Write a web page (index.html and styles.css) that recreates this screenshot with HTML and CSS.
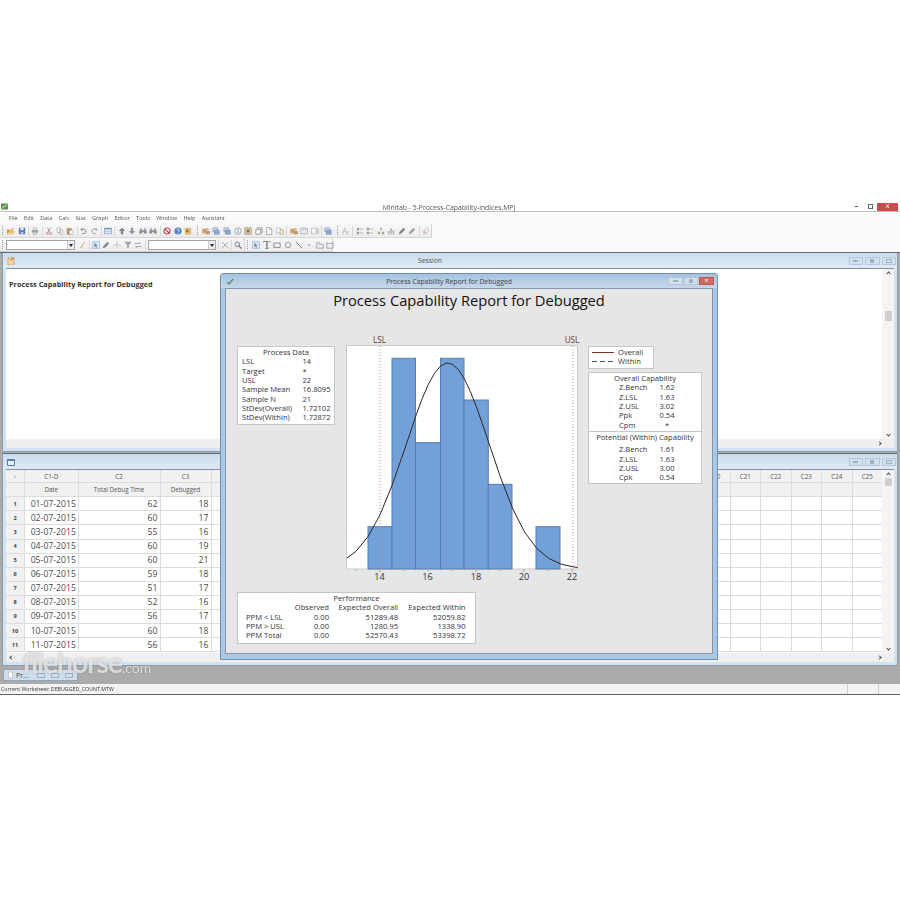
FILE: index.html
```html
<!DOCTYPE html>
<html lang="en">
<head>
    <meta charset="UTF-8">
    <meta name="viewport" content="width=device-width, initial-scale=1.0">
    <title>Minitab - 5-Process-Capability-indices.MPJ</title>
    <link rel="stylesheet" href="styles.css">
</head>
<body>
    <svg class="sprite" aria-hidden="true">
        <symbol id="i-open" viewBox="0 0 10 10"><path d="M0 3h3l1 1h4v1H3L1 9H0z" fill="#c98f2e"/><path d="M3 5h7L8 9H1z" fill="#efc061"/><path d="M6 1l2 1-1 2z" fill="#d9542b"/></symbol>
        <symbol id="i-save" viewBox="0 0 10 10"><path d="M1 1h8v8H1z" fill="#3d62a8"/><path d="M3 1h4v3H3z" fill="#e8eef8"/><path d="M3 6h4v3H3z" fill="#9db3d6"/></symbol>
        <symbol id="i-print" viewBox="0 0 10 10"><path d="M3 1h4v3H3z" fill="#eee" stroke="#888" stroke-width=".6"/><path d="M1 4h8v3H1z" fill="#8b8f96"/><path d="M3 6h4v3H3z" fill="#ddd" stroke="#777" stroke-width=".6"/></symbol>
        <symbol id="i-cut" viewBox="0 0 10 10"><path d="M3 1l3 5M7 1L4 6" stroke="#777" fill="none"/><circle cx="3" cy="8" r="1.3" fill="none" stroke="#a66"/><circle cx="7" cy="8" r="1.3" fill="none" stroke="#a66"/></symbol>
        <symbol id="i-copy" viewBox="0 0 10 10"><path d="M1.5 1h4v6h-4zM4.5 3.5h4V9h-4z" fill="#fafafa" stroke="#999" stroke-width=".8"/></symbol>
        <symbol id="i-paste" viewBox="0 0 10 10"><path d="M1 1.5h6v8H1z" fill="#a97f45"/><path d="M4 4h5v5.500H4z" fill="#f4f4f4" stroke="#888" stroke-width=".6"/></symbol>
        <symbol id="i-undo" viewBox="0 0 10 10"><path d="M2 3.500a3 3 0 1 1 1 4.500" fill="none" stroke="#667" stroke-width="1.2"/><path d="M.5 2l3.500.5L2 5z" fill="#667"/></symbol>
        <symbol id="i-redo" viewBox="0 0 10 10"><path d="M8 3.500a3 3 0 1 0-1 4.500" fill="none" stroke="#889" stroke-width="1.2"/><path d="M9.500 2L6 2.500 8 5z" fill="#889"/></symbol>
        <symbol id="i-sheet" viewBox="0 0 10 10"><path d="M.5 1.5h9v7h-9z" fill="#dfe9f5" stroke="#5d7fae" stroke-width=".8"/><path d="M.5 1.5h9V3h-9z" fill="#5d7fae"/><path d="M1.5 5.5h7" stroke="#9cb4d2"/></symbol>
        <symbol id="i-up" viewBox="0 0 10 10"><path d="M5 1l4 4H6.500v4h-3V5H1z" fill="#6a7480"/></symbol>
        <symbol id="i-down" viewBox="0 0 10 10"><path d="M5 9l4-4H6.500V1h-3v4H1z" fill="#7c8590"/></symbol>
        <symbol id="i-find" viewBox="0 0 10 10"><path d="M1 3h3v5H0zM6 3h3l1 5H6zM4 4h2v2H4z" fill="#777f88"/><path d="M1.5 1h2v2h-2zM6.5 1h2v2h-2z" fill="#9aa1a9"/></symbol>
        <symbol id="i-stop" viewBox="0 0 10 10"><circle cx="5" cy="5" r="3.8" fill="#fff" stroke="#c4262e" stroke-width="1.4"/><path d="M2.500 2.500l5 5" stroke="#c4262e" stroke-width="1.4"/></symbol>
        <symbol id="i-help" viewBox="0 0 10 10"><circle cx="5" cy="5" r="4.5" fill="#2f6fb7"/><path d="M3.500 4a1.500 1.500 0 1 1 2 1.500L5 6.500" fill="none" stroke="#fff"/><path d="M4.500 7.300h1v1h-1z" fill="#fff"/></symbol>
        <symbol id="i-book" viewBox="0 0 10 10"><path d="M1 1h8v8.500H1z" fill="#d8b65c"/><path d="M3 2.500l3 2.500-3 2.500z" fill="#8a3b2a"/></symbol>
        <symbol id="i-chart" viewBox="0 0 10 10"><path d="M0 2h6v6H0z" fill="#d9a869"/><path d="M4 5h6v4H4z" fill="#b98a52"/><path d="M1 7l3-4 2 2" fill="none" stroke="#7a5a3a" stroke-width=".8"/><path d="M7 1l2 2H6z" fill="#c54"/></symbol>
        <symbol id="i-stack" viewBox="0 0 10 10"><path d="M1 1h6v5H1z" fill="#c7d6ea" stroke="#5978a8" stroke-width=".7"/><path d="M3 4h6v5H3z" fill="#7e9ccb" stroke="#4f6f9f" stroke-width=".7"/></symbol>
        <symbol id="i-info" viewBox="0 0 10 10"><circle cx="5" cy="5" r="4" fill="#eef2f7" stroke="#7b8ba0"/><path d="M4.500 4.300h1v3.200h-1zM4.500 2.500h1v1h-1z" fill="#4f6f9f"/></symbol>
        <symbol id="i-note" viewBox="0 0 10 10"><path d="M1 1h8v8H1z" fill="#f0d9a3" stroke="#6f5a30" stroke-width=".8"/><path d="M3 3h4v4H3z" fill="#666"/></symbol>
        <symbol id="i-win" viewBox="0 0 10 10"><path d="M3 1h6v6H3z" fill="#ddd" stroke="#777" stroke-width=".8"/><path d="M1 3h6v6H1z" fill="#f7f7f7" stroke="#666" stroke-width=".8"/></symbol>
        <symbol id="i-new" viewBox="0 0 10 10"><path d="M2 .5h4L8.500 3v6.500H2z" fill="#fff" stroke="#777" stroke-width=".8"/><path d="M6 .5V3h2.500" fill="none" stroke="#777" stroke-width=".8"/></symbol>
        <symbol id="i-docs" viewBox="0 0 10 10"><path d="M.5 1.5h5v6h-5z" fill="#fff" stroke="#999" stroke-width=".8"/><path d="M5 3.500h4V9H5z" fill="#f2ead8" stroke="#a58f60" stroke-width=".8"/></symbol>
        <symbol id="i-table" viewBox="0 0 10 10"><path d="M.5 1.5h9v7h-9z" fill="#f3f6fa" stroke="#7d8ea5" stroke-width=".8"/><path d="M.5 3.500h9M3.500 1.500v7M6.500 1.500v7" stroke="#a7b5c7" stroke-width=".6"/></symbol>
        <symbol id="i-panes" viewBox="0 0 10 10"><path d="M.5 1.5h9v7h-9z" fill="#f7f7f7" stroke="#999" stroke-width=".8"/><path d="M5.500 2H9v6H5.500z" fill="#c5c9ce"/></symbol>
        <symbol id="i-fx" viewBox="0 0 10 10"><path d="M1 9l2-7h2M2 5h3M5 5l3 4M8 5L5.500 9" fill="none" stroke="#999" stroke-width=".8"/></symbol>
        <symbol id="i-tree" viewBox="0 0 10 10"><path d="M1 1h3v3H1zM1 6h3v3H1z" fill="#8d8f7a"/><path d="M5 2.500h4M5 7.500h4" stroke="#aaa" stroke-width="1.2"/></symbol>
        <symbol id="i-org" viewBox="0 0 10 10"><path d="M4 1h2v3H4zM1 6h3v3H1zM6 6h3v3H6z" fill="#9a9a86"/></symbol>
        <symbol id="i-tools" viewBox="0 0 10 10"><path d="M1 8V5h2v3zM4 8V2h2v6zM7 8V4h2v4z" fill="#9aa3ab"/><path d="M0 9h10" stroke="#bbb"/></symbol>
        <symbol id="i-pen" viewBox="0 0 10 10"><path d="M1 9l1-3 5-5 2 2-5 5z" fill="#666f78"/></symbol>
        <symbol id="i-pen2" viewBox="0 0 10 10"><path d="M1 9l1-3 5-5 2 2-5 5z" fill="#8b9097"/><path d="M7 1l2 2-1 1-2-2z" fill="#c8a46a"/></symbol>
        <symbol id="i-erase" viewBox="0 0 10 10"><path d="M1 6l5-5 3 3-5 5H3z" fill="#f4f4f4" stroke="#aaa" stroke-width=".8"/><path d="M1 6l2-2 3 3-2 2H3z" fill="#d9b8b8"/></symbol>
        <symbol id="i-brush" viewBox="0 0 10 10"><path d="M2 9L7 2l1 .7L4 9.500zM8 1c1-.5 1.500.3 1 1L8 2.700 7.200 2z" fill="#c7b59c"/></symbol>
        <symbol id="i-select" viewBox="0 0 10 10"><path d="M.5.5h9v9h-9z" fill="#cfe3f7" stroke="#7fa8d1" stroke-width=".8"/><path d="M3 2l4 4-1.800.2 1 2-1 .4-1-2L3 7.800z" fill="#5d7590"/></symbol>
        <symbol id="i-plus" viewBox="0 0 10 10"><path d="M5 0v10M0 5h10" stroke="#b4b8bc"/></symbol>
        <symbol id="i-funnel" viewBox="0 0 10 10"><path d="M1 1h8v1L6 5v4H4V5L1 2z" fill="#8b9197"/></symbol>
        <symbol id="i-eq" viewBox="0 0 10 10"><path d="M1 3h7L6.500 1.500M9 7H2l1.500 1.500" fill="none" stroke="#7d848b"/></symbol>
        <symbol id="i-x" viewBox="0 0 10 10"><path d="M1 1l8 8M9 1L1 9" stroke="#8b8f94"/></symbol>
        <symbol id="i-search" viewBox="0 0 10 10"><circle cx="4" cy="4" r="3" fill="#e9f0f7" stroke="#556"/><path d="M6 6l3.500 3.500" stroke="#556" stroke-width="1.5"/></symbol>
        <symbol id="i-rect" viewBox="0 0 10 10"><path d="M1 2.500h8V8H1z" fill="none" stroke="#5e666e"/></symbol>
        <symbol id="i-circle" viewBox="0 0 10 10"><circle cx="5" cy="5" r="3.5" fill="none" stroke="#6b7279"/></symbol>
        <symbol id="i-line" viewBox="0 0 10 10"><path d="M1 1l8 8" stroke="#555c63" stroke-width="1.1"/></symbol>
        <symbol id="i-dot" viewBox="0 0 10 10"><circle cx="5" cy="5" r="1.3" fill="#9aa1a8"/></symbol>
        <symbol id="i-poly" viewBox="0 0 10 10"><path d="M1 2h3v2h5v5H1z" fill="none" stroke="#7f8890"/></symbol>
        <symbol id="i-poly2" viewBox="0 0 10 10"><path d="M1 2l2 1h4l2-1v7H1z" fill="none" stroke="#7f8890"/></symbol>
    </svg>

    <div class="app">
        <header class="title-bar">
            <svg class="app-icon" viewBox="0 0 8 7"><path d="M0 0h8v7H0z" fill="#5f9448"/><path d="M1 6l2-3 1 1 3-3" fill="none" stroke="#e5f0dc"/></svg>
            <span class="app-name">Minitab - 5-Process-Capability-indices.MPJ</span>
            <div class="app-buttons">
                <span class="app-min"></span>
                <span class="app-max"></span>
                <span class="app-close">x</span>
            </div>
        </header>

        <nav class="menu">
            <span>File</span><span>Edit</span><span>Data</span><span>Calc</span><span>Stat</span><span>Graph</span><span>Editor</span><span>Tools</span><span>Window</span><span>Help</span><span>Assistant</span>
        </nav>

        <div class="band">
            <div class="toolbar toolbar-main">
                <i class="grip"></i>
                <svg class="ic"><use href="#i-open"/></svg>
                <svg class="ic"><use href="#i-save"/></svg>
                <i class="sep"></i>
                <svg class="ic"><use href="#i-print"/></svg>
                <i class="sep"></i>
                <svg class="ic"><use href="#i-cut"/></svg>
                <svg class="ic"><use href="#i-copy"/></svg>
                <svg class="ic"><use href="#i-paste"/></svg>
                <i class="sep"></i>
                <svg class="ic"><use href="#i-undo"/></svg>
                <svg class="ic"><use href="#i-redo"/></svg>
                <i class="sep"></i>
                <svg class="ic"><use href="#i-sheet"/></svg>
                <i class="sep"></i>
                <svg class="ic"><use href="#i-up"/></svg>
                <svg class="ic"><use href="#i-down"/></svg>
                <svg class="ic"><use href="#i-find"/></svg>
                <svg class="ic"><use href="#i-find"/></svg>
                <i class="sep"></i>
                <svg class="ic"><use href="#i-stop"/></svg>
                <svg class="ic"><use href="#i-help"/></svg>
                <svg class="ic"><use href="#i-book"/></svg>
                <i class="grip"></i>
                <svg class="ic"><use href="#i-chart"/></svg>
                <svg class="ic"><use href="#i-stack"/></svg>
                <svg class="ic"><use href="#i-stack"/></svg>
                <svg class="ic"><use href="#i-info"/></svg>
                <svg class="ic"><use href="#i-note"/></svg>
                <svg class="ic"><use href="#i-win"/></svg>
                <svg class="ic"><use href="#i-new"/></svg>
                <svg class="ic"><use href="#i-docs"/></svg>
                <i class="sep"></i>
                <svg class="ic"><use href="#i-chart"/></svg>
                <svg class="ic"><use href="#i-table"/></svg>
                <svg class="ic"><use href="#i-panes"/></svg>
                <i class="sep"></i>
                <svg class="ic"><use href="#i-stack"/></svg>
                <i class="grip"></i>
                <svg class="ic"><use href="#i-fx"/></svg>
                <i class="sep"></i>
                <svg class="ic"><use href="#i-tree"/></svg>
                <svg class="ic"><use href="#i-tree"/></svg>
                <svg class="ic"><use href="#i-org"/></svg>
                <svg class="ic"><use href="#i-tools"/></svg>
                <svg class="ic"><use href="#i-pen"/></svg>
                <svg class="ic"><use href="#i-pen2"/></svg>
                <i class="sep"></i>
                <svg class="ic"><use href="#i-erase"/></svg>
            </div>
        </div>

        <div class="band">
            <div class="toolbar toolbar-edit">
                <i class="grip"></i>
                <div class="combo combo-a"><b></b></div>
                <svg class="ic"><use href="#i-brush"/></svg>
                <i class="sep"></i>
                <svg class="ic"><use href="#i-select"/></svg>
                <svg class="ic"><use href="#i-pen"/></svg>
                <svg class="ic"><use href="#i-plus"/></svg>
                <svg class="ic"><use href="#i-funnel"/></svg>
                <svg class="ic"><use href="#i-eq"/></svg>
                <i class="sep"></i>
                <div class="combo combo-b"><b></b></div>
                <i class="sep"></i>
                <svg class="ic"><use href="#i-x"/></svg>
                <i class="sep"></i>
                <svg class="ic"><use href="#i-search"/></svg>
            </div>
            <div class="toolbar toolbar-draw">
                <i class="grip"></i>
                <svg class="ic"><use href="#i-select"/></svg>
                <span class="ic ic-t">T</span>
                <svg class="ic"><use href="#i-rect"/></svg>
                <svg class="ic"><use href="#i-circle"/></svg>
                <svg class="ic"><use href="#i-line"/></svg>
                <svg class="ic"><use href="#i-dot"/></svg>
                <svg class="ic"><use href="#i-poly"/></svg>
                <svg class="ic"><use href="#i-poly2"/></svg>
            </div>
        </div>

        <main class="mdi">
            <section class="win session">
                <div class="win-title">
                    <svg class="win-icon" viewBox="0 0 8 8"><path d="M1 1h6v7H1z" fill="#f3d9a6" stroke="#b98b46" stroke-width=".6"/><path d="M3 3l3-3 1 1-3 3z" fill="#d98a3d"/></svg>
                    <span class="win-name">Session</span>
                    <div class="win-buttons"><span class="btn-min"></span><span class="btn-max"></span><span class="btn-close"></span></div>
                </div>
                <div class="win-body">
                    <div class="session-text">Process Capability Report for Debugged</div>
                    <div class="vscroll"><i class="arrow-up"></i><span class="thumb thumb-session"></span><i class="arrow-down"></i></div>
                </div>
                <div class="hscroll"><i class="arrow-right"></i></div>
            </section>

            <section class="win worksheet">
                <div class="win-title">
                    <svg class="win-icon" viewBox="0 0 8 8"><path d="M.5 1.5h7v6h-7z" fill="#e6eef7" stroke="#5a7fa8"/><path d="M.5 1.5h7V3h-7z" fill="#5a7fa8"/></svg>
                    <div class="win-buttons"><span class="btn-min"></span><span class="btn-max"></span><span class="btn-close"></span></div>
                </div>
                <div class="win-body">
                    <div class="sheet">
                        <div class="th rn">↓</div><div class="th">C1-D</div><div class="th">C2</div><div class="th">C3</div>
                        <div class="th rest"><span>C4</span><span>C5</span><span>C6</span><span>C7</span><span>C8</span><span>C9</span><span>C10</span><span>C11</span><span>C12</span><span>C13</span><span>C14</span><span>C15</span><span>C16</span><span>C17</span><span>C18</span><span>C19</span><span>C20</span><span>C21</span><span>C22</span><span>C23</span><span>C24</span><span>C25</span></div>

                        <div class="th rn"></div><div class="th name">Date</div><div class="th name">Total Debug Time</div><div class="th name">Debugged</div><div class="th rest"></div>

                        <div class="rn">1</div><div class="date">01-07-2015</div><div class="num">62</div><div class="num">18</div><div class="rest"></div>
                        <div class="rn">2</div><div class="date">02-07-2015</div><div class="num">60</div><div class="num">17</div><div class="rest"></div>
                        <div class="rn">3</div><div class="date">03-07-2015</div><div class="num">55</div><div class="num">16</div><div class="rest"></div>
                        <div class="rn">4</div><div class="date">04-07-2015</div><div class="num">60</div><div class="num">19</div><div class="rest"></div>
                        <div class="rn">5</div><div class="date">05-07-2015</div><div class="num">60</div><div class="num">21</div><div class="rest"></div>
                        <div class="rn">6</div><div class="date">06-07-2015</div><div class="num">59</div><div class="num">18</div><div class="rest"></div>
                        <div class="rn">7</div><div class="date">07-07-2015</div><div class="num">51</div><div class="num">17</div><div class="rest"></div>
                        <div class="rn">8</div><div class="date">08-07-2015</div><div class="num">52</div><div class="num">16</div><div class="rest"></div>
                        <div class="rn">9</div><div class="date">09-07-2015</div><div class="num">56</div><div class="num">17</div><div class="rest"></div>
                        <div class="rn">10</div><div class="date">10-07-2015</div><div class="num">60</div><div class="num">18</div><div class="rest"></div>
                        <div class="rn">11</div><div class="date">11-07-2015</div><div class="num">56</div><div class="num">16</div><div class="rest"></div>
                    </div>
                    <div class="vscroll"><i class="arrow-up"></i><span class="thumb"></span><i class="arrow-down"></i></div>
                </div>
                <div class="hscroll"><i class="arrow-left"></i><i class="arrow-right"></i></div>
            </section>

            <div class="tabs">
                <div class="tab">
                    <svg viewBox="0 0 6 8"><path d="M.5.5h5v7h-5z" fill="#fff" stroke="#999" stroke-width=".6"/></svg>
                    <span class="tab-name">Pr...</span>
                    <i class="tab-btn"></i><i class="tab-btn"></i><i class="tab-btn"></i>
                </div>
            </div>

            <div class="watermark">filehorse<small>.com</small></div>

            <!-- graph window floats over the session and worksheet -->
            <section class="graph-win">
                <div class="graph-title">
                    <svg class="graph-check" viewBox="0 0 8 7"><path d="M1 4l2 2 4-5" fill="none" stroke="#5f8a62" stroke-width="1.3"/></svg>
                    <span class="graph-name">Process Capability Report for Debugged</span>
                    <div class="graph-buttons"><span class="btn-min"></span><span class="btn-max"></span><span class="graph-close">×</span></div>
                </div>
                <div class="graph-body">
                    <h1>Process Capability Report for Debugged</h1>
                    <div class="graph-row">
                        <div class="panel process">
                            <div class="panel-head">Process Data</div>
                            <div class="kv"><span>LSL</span><span>14</span></div>
                            <div class="kv"><span>Target</span><span>*</span></div>
                            <div class="kv"><span>USL</span><span>22</span></div>
                            <div class="kv"><span>Sample Mean</span><span>16.8095</span></div>
                            <div class="kv"><span>Sample N</span><span>21</span></div>
                            <div class="kv"><span>StDev(Overall)</span><span>1.72102</span></div>
                            <div class="kv"><span>StDev(Within)</span><span>1.72872</span></div>
                        </div>

                        <svg class="chart" viewBox="346 332 234 258">
                            <rect x="346.5" y="346.5" width="231" height="223.5" fill="#fff" stroke="#c9c9c9"/>
                            <g fill="#72a1da" stroke="#5a7dab">
                                <rect x="368" y="527.7" width="24" height="42.3"/>
                                <rect x="392" y="359.3" width="23.5" height="210.7"/>
                                <rect x="415.5" y="443.7" width="25" height="126.3"/>
                                <rect x="440.5" y="359.3" width="23.5" height="210.7"/>
                                <rect x="464" y="401" width="24.3" height="169"/>
                                <rect x="488.3" y="485.3" width="23.7" height="84.7"/>
                                <rect x="536" y="527.7" width="24" height="42.3"/>
                            </g>
                            <path d="M380 347v223M573 347v223" stroke="#c98a8a" stroke-dasharray="1 2" fill="none"/>
                            <path d="M380 570v3M428 570v3M476 570v3M524 570v3M572 570v3M356 570v2M404 570v2M452 570v2M500 570v2M548 570v2" stroke="#aaa" fill="none"/>
                            <polyline fill="none" stroke="#2f2424" stroke-width="1" stroke-linejoin="round" points="347,559 356,552.3 368,537.6 380,515.8 392,486.4 404.2,451.6 416.2,415.9 422.2,399.6 428.2,385.6 434.3,374.7 440.3,367.3 446.3,364 452.3,365.2 458.4,370.6 464.4,379.9 470.4,392.7 476.4,407.9 482.4,424.8 488.5,442.9 500.5,478.3 512.6,509.4 524.6,533.1 536.7,549.4 548.7,559.4 560.8,565 572.8,567.8 577.6,568.5"/>
                            <text class="spec" x="379.5" y="343.5">LSL</text>
                            <text class="spec" x="572" y="343.5">USL</text>
                            <text class="tick" x="379.5" y="581">14</text>
                            <text class="tick" x="427.5" y="581">16</text>
                            <text class="tick" x="476" y="581">18</text>
                            <text class="tick" x="524" y="581">20</text>
                            <text class="tick" x="572" y="581">22</text>
                        </svg>

                        <div class="side">
                            <div class="panel legend">
                                <div class="legend-row"><i class="swatch"></i>Overall</div>
                                <div class="legend-row"><i class="swatch dashed"></i>Within</div>
                            </div>
                            <div class="panel capability">
                                <div class="panel-head">Overall Capability</div>
                                <div class="cap"><span>Z.Bench</span><span>1.62</span></div>
                                <div class="cap"><span>Z.LSL</span><span>1.63</span></div>
                                <div class="cap"><span>Z.USL</span><span>3.02</span></div>
                                <div class="cap"><span>Ppk</span><span>0.54</span></div>
                                <div class="cap"><span>Cpm</span><span>*</span></div>
                                <div class="panel-head potential">Potential (Within) Capability</div>
                                <div class="cap"><span>Z.Bench</span><span>1.61</span></div>
                                <div class="cap"><span>Z.LSL</span><span>1.63</span></div>
                                <div class="cap"><span>Z.USL</span><span>3.00</span></div>
                                <div class="cap"><span>Cpk</span><span>0.54</span></div>
                            </div>
                        </div>
                    </div>

                    <div class="panel performance">
                        <div class="panel-head">Performance</div>
                        <div class="perf"><span></span><span>Observed</span><span>Expected Overall</span><span>Expected Within</span></div>
                        <div class="perf"><span>PPM &lt; LSL</span><span>0.00</span><span>51289.48</span><span>52059.82</span></div>
                        <div class="perf"><span>PPM &gt; USL</span><span>0.00</span><span>1280.95</span><span>1338.90</span></div>
                        <div class="perf"><span>PPM Total</span><span>0.00</span><span>52570.43</span><span>53398.72</span></div>
                    </div>
                </div>
            </section>
        </main>

        <footer class="status">
            <span class="status-text">Current Worksheet: DEBUGGED_COUNT.MTW</span>
            <i class="status-cell"></i>
            <i class="status-cell"></i>
        </footer>
    </div>
</body>
</html>
```

FILE: styles.css
```css
body {
    margin: 0;
    background: #fff;
    font-family: "Open Sans", "Noto Sans", sans-serif;
    color: #333;
}
.sprite {
    position: absolute;
    width: 0;
    height: 0;
}
.app {
    margin-top: 195px;
    height: 500px;
    display: flex;
    flex-direction: column;
    filter: blur(0.4px);
}

/* title bar and menu */
.title-bar {
    height: 17px;
    box-sizing: border-box;
    border-bottom: 1px solid #bdbdbd;
    display: flex;
    align-items: center;
}
.app-icon {
    width: 7px;
    height: 7px;
    margin: 7px 0 0 1px;
}
.app-name {
    flex: 1;
    padding-left: 35px;
    text-align: center;
    font-size: 6.85px;
    color: #555;
    margin-top: 8px;
}
.app-buttons {
    display: flex;
    align-items: center;
    margin: 7px 2px 0 0;
}
.app-min {
    width: 3px;
    height: 1px;
    background: #555;
    margin-right: 10px;
}
.app-max {
    width: 3px;
    height: 3px;
    border: 1px solid #666;
    margin-right: 4px;
}
.app-close {
    width: 21px;
    height: 8px;
    line-height: 6px;
    background: #cb4a4a;
    color: #fff;
    font-size: 7px;
    text-align: center;
}
.menu {
    height: 12px;
    display: flex;
    align-items: center;
    gap: 6.4px;
    padding-left: 9px;
    font-size: 5.5px;
    color: #555;
    background: #fafafa;
}
.band {
    display: flex;
    height: 14px;
    background: #fafafa;
}

/* toolbars */
.toolbar {
    display: flex;
    align-items: center;
    padding-left: 2px;
    box-sizing: border-box;
    height: 14px;
    background: linear-gradient(#f7f7f7, #ececec);
    border-right: 1px solid #d5d5d5;
    border-bottom: 1px solid #d5d5d5;
}
.toolbar-main {
    width: 432px;
}
.toolbar-edit {
    width: 245px;
}
.toolbar-draw {
    width: 88px;
}
.ic {
    width: 8px;
    height: 8px;
    margin: 0 1.3px;
    flex: none;
    display: block;
    opacity: 0.85;
}
.ic-t {
    font-family: "Liberation Serif", serif;
    font-size: 12px;
    line-height: 9px;
    color: #35506e;
    text-align: center;
}
.sep {
    width: 1px;
    height: 10px;
    margin: 0 1px;
    background: #d8d8d8;
    flex: none;
}
.grip {
    width: 1px;
    height: 9px;
    margin: 0 3px 0 0;
    flex: none;
    background: repeating-linear-gradient(#999 0 1px, transparent 1px 2px);
}
.toolbar .grip:not(:first-child) {
    margin: 0 3px;
}
.combo {
    height: 10px;
    box-sizing: border-box;
    background: #fff;
    border: 1px solid #a5a5a5;
    display: flex;
    justify-content: flex-end;
    flex: none;
}
.combo b {
    width: 6px;
    background: #eee;
    border-left: 1px solid #ccc;
    position: relative;
}
.combo b::after {
    content: "";
    position: absolute;
    left: 1px;
    top: 3px;
    border: 2px solid transparent;
    border-top: 3px solid #222;
    border-bottom: 0;
}
.combo-a {
    width: 69px;
    margin-right: 2px;
}
.combo-b {
    width: 68px;
    margin: 0 1px;
}

/* child windows */
.mdi {
    flex: 1;
    position: relative;
    display: flex;
    flex-direction: column;
    background: #ababab;
    border-top: 1px solid #5e6b78;
}
.win {
    margin: 0 2px;
    display: flex;
    flex-direction: column;
    box-sizing: border-box;
    padding: 0 3px 3px;
    background: #d3e2f0;
    border: 1px solid #8c9cad;
    border-top: 0;
}
.session {
    height: 199px;
}
.worksheet {
    height: 213px;
    margin-top: 1px;
    border-top: 1px solid #5e6b78;
}
.win-title {
    height: 15px;
    flex: none;
    display: flex;
    align-items: center;
    position: relative;
    margin: 0 -3px;
    padding: 0 1px 0 3px;
    background: linear-gradient(#cbdced, #dfeaf5);
}
.win-icon {
    width: 8px;
    height: 8px;
    margin-left: 1px;
}
.win-name {
    position: absolute;
    left: 397px;
    width: 60px;
    text-align: center;
    font-size: 6.8px;
    color: #555;
}
.win-buttons {
    margin-left: auto;
    display: flex;
    gap: 2px;
}
.win-buttons span,
.graph-buttons span {
    width: 14.5px;
    height: 8px;
    box-sizing: border-box;
    border: 1px solid #b4c6d8;
    background: #d2e0ee;
    display: flex;
    align-items: center;
    justify-content: center;
}
.btn-min::after {
    content: "";
    width: 5px;
    height: 2px;
    border: 1px solid #9fb0c0;
    box-sizing: border-box;
}
.btn-max::after {
    content: "";
    width: 4px;
    height: 4px;
    background: #9fb0c0;
}
.btn-close::after {
    content: "";
    width: 6px;
    height: 4px;
    border: 1px solid #9fb0c0;
    box-sizing: border-box;
}
.win-body {
    flex: 1;
    display: flex;
    min-height: 0;
    background: #fff;
    border-top: 1px solid #7f8f9f;
}
.session-text {
    flex: 1;
    padding: 10px 0 0 3px;
    font-size: 7.3px;
    font-weight: 700;
    line-height: 10px;
    color: #333;
}
.vscroll {
    width: 12px;
    flex: none;
    display: flex;
    flex-direction: column;
    align-items: center;
    background: #f4f4f4;
    padding: 2px 0;
    box-sizing: border-box;
}
.arrow-up,
.arrow-down,
.arrow-left,
.arrow-right {
    width: 3px;
    height: 3px;
    flex: none;
    box-sizing: border-box;
    border: solid #444;
    border-width: 1px 0 0 1px;
}
.arrow-up {
    transform: rotate(45deg);
    margin-top: 1px;
}
.arrow-down {
    transform: rotate(225deg);
    margin-top: auto;
    margin-bottom: 1px;
}
.arrow-left {
    transform: rotate(-45deg);
    margin-right: auto;
    margin-left: 4px;
}
.arrow-right {
    transform: rotate(135deg);
}
.thumb {
    width: 7px;
    height: 8px;
    background: #cfcfcf;
    margin-top: 2px;
}
.thumb-session {
    margin-top: 36px;
    height: 10px;
}
.hscroll {
    height: 9px;
    flex: none;
    display: flex;
    justify-content: flex-end;
    align-items: center;
    padding-right: 13px;
    background: #efefef;
}

/* worksheet grid */
.sheet {
    flex: 1;
    display: grid;
    grid-template-columns: 19px 53.5px 82px 51px 671.2px;
    grid-template-rows: 13.3px 14px repeat(11, 14.09px);
    font-size: 8.7px;
    color: #4a4a4a;
    overflow: hidden;
}
.sheet > div {
    box-sizing: border-box;
    border-right: 1px solid #dcdcdc;
    border-bottom: 1px solid #dcdcdc;
    display: flex;
    align-items: center;
    min-width: 0;
}
.th {
    justify-content: center;
    background: #f1f1f1;
    font-size: 6.2px;
    color: #555;
}
.name {
    font-weight: 500;
}
.rn {
    justify-content: center;
    background: #f1f1f1;
    font-size: 5.6px;
    font-weight: 700;
    color: #444;
}
.date {
    justify-content: flex-end;
    padding-right: 1.5px;
}
.num {
    justify-content: flex-end;
    padding-right: 2px;
}
.sheet > .rest {
    justify-content: flex-start;
    border-right: 0;
    background: repeating-linear-gradient(to right, transparent 0 29.5px, #dcdcdc 29.5px 30.51px);
}
.sheet > .th.rest {
    background: repeating-linear-gradient(to right, #f1f1f1 0 29.5px, #dcdcdc 29.5px 30.51px);
}
.rest span {
    flex: none;
    width: 30.51px;
    text-align: center;
}

/* bottom of the workspace */
.tabs {
    flex: 1;
    padding: 3px 0 0 3px;
}
.tab {
    width: 75px;
    height: 12px;
    display: flex;
    align-items: center;
    gap: 3px;
    box-sizing: border-box;
    padding-left: 4px;
    background: #cfdeed;
    border: 1px solid #93a6b8;
    font-size: 7px;
    color: #444;
}
.tab svg {
    width: 5px;
    height: 8px;
}
.tab-name {
    width: 18px;
}
.tab-btn {
    width: 8px;
    height: 5px;
    margin-right: 3px;
    box-sizing: border-box;
    border: 1px solid #a3b1bf;
}
.watermark {
    position: absolute;
    left: 22px;
    top: 392px;
    font-family: Lato, sans-serif;
    font-size: 29px;
    font-weight: 700;
    letter-spacing: -1.4px;
    line-height: 34px;
    color: rgba(236, 236, 236, 0.8);
    text-shadow: 0 0 2px rgba(90, 90, 90, 0.45);
}
.watermark small {
    font-size: 14px;
    font-weight: 400;
    letter-spacing: 0;
}
.status {
    height: 11px;
    box-sizing: border-box;
    flex: none;
    display: flex;
    align-items: center;
    padding-left: 1px;
    background: #f3f3f3;
    border-bottom: 1px solid #666;
}
.status-text {
    flex: 1;
    font-size: 5.3px;
    color: #333;
}
.status-cell {
    width: 30px;
    height: 10px;
    border-left: 1px solid #ccc;
}
.status-cell:last-child {
    width: 21px;
}

/* graph window */
.graph-win {
    position: absolute;
    left: 220px;
    top: 20px;
    width: 498px;
    height: 387px;
    box-sizing: border-box;
    display: flex;
    flex-direction: column;
    padding: 0 4px 5px;
    background: #a9c8e6;
    border: 1px solid #6f90b0;
    border-radius: 3px 3px 0 0;
}
.graph-title {
    height: 14px;
    flex: none;
    display: flex;
    align-items: center;
    position: relative;
    margin: 0 -4px;
    padding: 0 3px;
    background: linear-gradient(#a5c2de, #c6d8ea);
}
.graph-check {
    width: 8px;
    height: 7px;
    margin-left: 2px;
}
.graph-name {
    position: absolute;
    left: 0;
    right: 40px;
    text-align: center;
    font-size: 6.8px;
    color: #444;
}
.graph-buttons {
    margin-left: auto;
    display: flex;
    gap: 1px;
    position: relative;
}
.graph-buttons .graph-close {
    width: 15px;
    line-height: 6px;
    background: #cf6a63;
    border-color: #b9574f;
    color: #fff;
    font-size: 7px;
}
.graph-body {
    flex: 1;
    background: #e6e6e6;
    border: 1px solid #8496a8;
    padding-left: 11px;
}
.graph-body h1 {
    margin: 0 0 0 -11px;
    height: 42px;
    box-sizing: border-box;
    text-align: center;
    font-size: 14.7px;
    font-weight: 400;
    line-height: 22px;
    color: #111;
}
.graph-row {
    display: flex;
    align-items: flex-start;
    height: 258px;
}
.panel {
    background: #fff;
    border: 1px solid #c6c6c6;
    box-sizing: border-box;
    font-size: 7.6px;
    line-height: 9.33px;
    color: #333;
}
.panel-head {
    text-align: center;
}
.process {
    width: 98px;
    height: 79px;
    margin-top: 15px;
    padding: 1px 4px;
}
.kv {
    display: grid;
    grid-template-columns: 60.5px 1fr;
}
.chart {
    width: 234px;
    height: 258px;
    margin-left: 11px;
    flex: none;
}
.spec {
    font-size: 8.2px;
    fill: #6e3a3a;
    text-anchor: middle;
}
.tick {
    font-size: 9.2px;
    fill: #333;
    text-anchor: middle;
}
.side {
    margin: 15px 0 0 8px;
    width: 114px;
    display: flex;
    flex-direction: column;
    gap: 3px;
}
.legend {
    width: 66px;
    height: 23px;
    padding: 1px 0 0 3px;
}
.legend-row {
    display: flex;
    align-items: center;
    gap: 4px;
}
.swatch {
    width: 22px;
    height: 1px;
    background: #74302f;
}
.swatch.dashed {
    background: repeating-linear-gradient(to right, #555 0 5px, transparent 5px 8px);
}
.capability {
    height: 112px;
    padding-top: 1px;
}
.cap {
    display: grid;
    grid-template-columns: 35px 26px;
    margin-left: 30px;
}
.cap span:last-child {
    text-align: center;
}
.potential {
    border-top: 1px solid #c6c6c6;
    margin: 1px 0 3px;
    padding-top: 1px;
}
.performance {
    width: 239px;
    height: 52px;
    margin-top: 3px;
    padding-top: 1px;
}
.perf {
    display: grid;
    grid-template-columns: 46px 37px 69px 67.5px;
    padding-left: 8px;
}
.perf span + span {
    text-align: right;
}
```
